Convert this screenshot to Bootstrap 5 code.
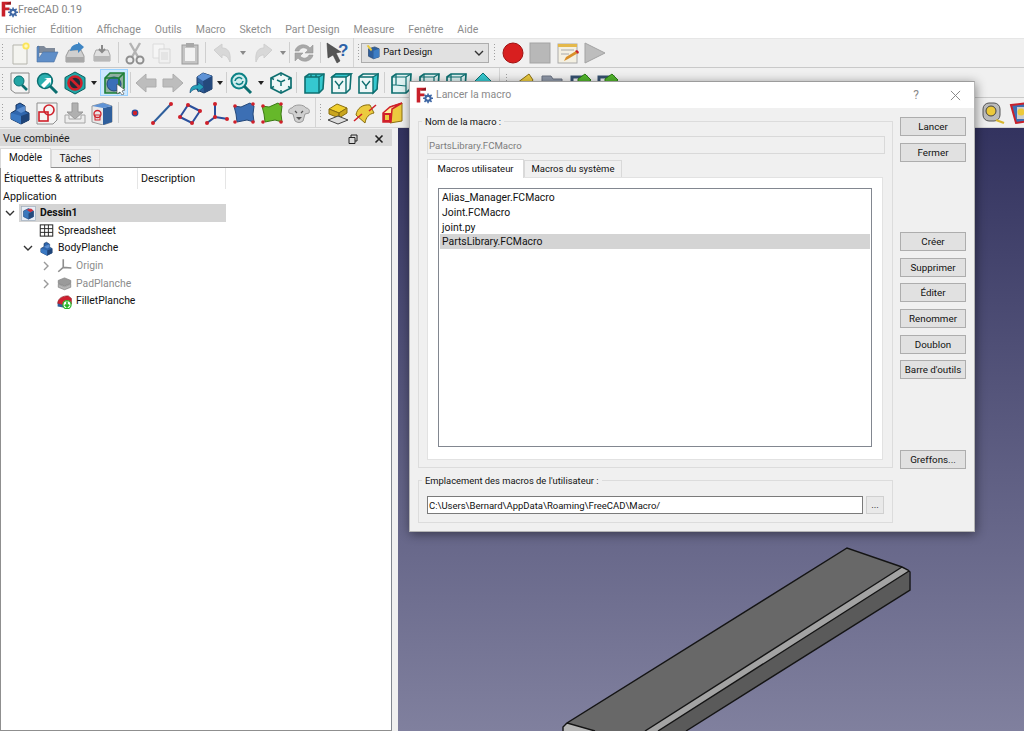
<!DOCTYPE html>
<html lang="fr">
<head>
<meta charset="utf-8">
<title>FreeCAD 0.19</title>
<link href="https://cdn.jsdelivr.net/npm/bootstrap@5.3.0/dist/css/bootstrap.min.css" rel="stylesheet">
<style>
html,body{height:100%;overflow:hidden}
body{font-family:Roboto,"Open Sans",sans-serif;font-size:10.4px;color:#111;background:#f0f0f0;position:relative;width:1024px;height:731px}
.app-title{height:19px;background:#fff;color:#858585;font-size:10.5px;padding-left:1px;line-height:18px}
.app-title svg{width:17px;height:17px}
.app-title span{padding-top:1px}
.app-menu{height:19px;background:#fff;color:#8d8d8d;font-size:10.5px;padding-left:5px;gap:14px;line-height:22px}
.app-tbar{background:#f0f0f0;border-bottom:1px solid #c9c9c9;overflow:hidden;flex:none;height:30px}
.tb1{box-shadow:inset 0 1px 0 #e6e6e6}
.tb3{border-bottom-color:#d4d4d4}
.tb2 .tdrop{width:12px}
.grip{width:6.3px;align-self:stretch;flex:none;margin:5px 0;background-image:radial-gradient(circle,#a0a0a0 .8px,transparent 1px);background-size:3px 3px;background-position:1px 0;background-repeat:repeat-y}
.gripw{width:9.3px;background-position:3px 0}
.tbt{width:27.33px;height:27px;flex:none;display:flex;align-items:center;justify-content:center}
.tbt svg{width:24px;height:24px}
.tbt.on{background:#cce8ff;box-shadow:inset 0 0 0 1px #99d1ff}
.tsep{width:5.7px;flex:none;align-self:stretch;margin:4px 0;position:relative}
.tsep::after{content:"";position:absolute;left:2px;top:0;bottom:0;width:1px;background:#cfcfcf}
.tsep-n{width:1.5px}
.tsep-n::after{left:0}
.tsep-s{width:4.7px}
.tend{width:1px;flex:none;align-self:stretch;background:#d4d4d4;margin:0 2px}
.tdrop{width:12.7px;flex:none;display:flex;justify-content:center}
.tdrop i{display:block;border:3px solid transparent;border-top:4px solid #222;border-bottom:0}
.tdrop.off i{border-top-color:#8a8a8a}
.wb-combo{width:128px;height:20px;flex:none;margin-left:-1px;background:#e1e1e1;border:1px solid #adadad;font-size:9.5px;padding:0 4px;gap:2px;color:#111}
.wb-combo svg.ic{width:15px;height:15px}
.wb-combo svg.ch{width:10px;height:10px;margin-left:auto}
.t-spacer{width:1px;flex:none}
.t-right{margin-left:auto;margin-right:-9.7px;display:flex}
.app-main{height:603px}
.dock{width:392px;flex:none;padding-top:1px}
.dock-head{height:17px;background:#d9d9d9;font-size:10.5px;padding:2px 0 0 3px;margin-bottom:2px;color:#222}
.dock-head .dk{width:26px;display:flex;justify-content:center}
.dock-head svg{width:10px;height:10px}
.dock-tabs{height:19px;font-size:10px}
.dtab{border:1px solid #d9d9d9;border-bottom:0;background:#f0f0f0;line-height:17px;margin-top:1px;width:49px;text-align:center;height:18px}
.dtab.cur{background:#fff;margin-top:0;height:20px;position:relative;z-index:1;width:51px;line-height:18px}
.tree-pan{flex:1;min-height:0;background:#fff;border:1px solid #8f8f8f;border-right-color:#828790}
.tree-head{height:21px;line-height:21px;font-size:10.7px}
.tree-head div{border-right:1px solid #e5e5e5;padding-left:3px}
.th-a{width:137px}
.th-b{width:88px}
.tree-app{height:15px;line-height:15px;padding-left:2px;font-size:10.7px}
.tree-row{height:17.7px;line-height:17.7px}
.t-i{width:18px;flex:none;display:flex;align-items:center;justify-content:center}
.t-i svg{width:15px;height:15px}
.t-i svg.chev{width:10px;height:10px}
.t-l{margin-left:3px}
.t-sel{width:207px;height:18px;background:#d4d4d4}
.t-dim{color:#8c8c8c}
.split{width:6px;flex:none;background:#f0f0f0}
.view3d{flex:1;background:linear-gradient(#33335f,#80809e);position:relative;overflow:hidden}
.view3d svg{position:absolute;left:0;top:0;width:626px;height:603px}
.macro-dlg{position:absolute;left:409px;top:81px;width:566px;height:451px;background:#f0f0f0;border:1px solid #b5b5b5;border-top-color:#9c9c9c;box-shadow:1px 2px 10px rgba(0,0,0,.45);z-index:5}
.dlg-title{height:26px;background:#fff;color:#8a8a8a;font-size:10.5px;padding:0 8px 0 6px}
.dlg-title svg.lg{width:17px;height:17px;margin-right:3px}
.dlg-q{margin-left:auto;width:12px;text-align:center;font-size:12px;color:#8a8a8a}
.dlg-x{width:11px;height:11px;margin:0 5px 0 28px;stroke:#808080}
.dlg-body{padding:9px 8px 0 8px;gap:7px;font-size:9.5px}
.dlg-col{width:475px;flex:none}
.fgrp{border:1px solid #dcdcdc;position:relative;padding:0 8px}
.fgrp-a{height:347px;margin-top:4px;padding-top:14px}
.fgrp-b{height:43px;margin-top:12px;padding-top:15px}
.fgrp-lab{position:absolute;left:3px;top:-7px;background:#f0f0f0;padding:0 3px;line-height:14px;color:#111;font-size:9.4px}
.fld{height:18px;font-size:9.5px;border-radius:0;padding:0 1px;line-height:16px;min-height:0;box-shadow:none}
.fld:disabled,.fld-off{background:#f0f0f0;border:1px solid #d9d9d9;color:#7d7d7d;opacity:1;width:458px;font-size:9.6px}
.fld-path{border:1px solid #7a7a7a;color:#111;width:436px;background:#fff}
.dtab-row{height:18px;margin-top:5px}
.dtab2{border:1px solid #d9d9d9;border-bottom:0;background:#f0f0f0;line-height:16px;margin-top:1px;text-align:center;width:98px;height:17px;font-size:9.5px}
.dtab2.cur{background:#fff;margin-top:0;height:19px;line-height:18px;width:97px;position:relative;z-index:1}
.tab-body{width:456px;height:283px;background:#fff;border:1px solid #e2e2e2;padding:10px}
.macro-list{height:259px;width:434px;border:1px solid #828790;background:#fff;border-radius:0;padding:1px;display:block}
.macro-list .list-group-item{border:0;background:transparent;padding:0 0 0 2px;height:15px;line-height:15px;font-size:10.4px;color:#111;border-radius:0}
.macro-list .list-group-item.active{background:#d4d4d4;color:#111}
.dlg-btn{width:66px;height:19px;padding:0;font-size:9.8px;line-height:17px;background:#e1e1e1;border:1px solid #adadad;border-radius:0;color:#111;flex:none;white-space:nowrap}
.dlg-btns{gap:6.6px;width:66px}
.gap-b1{margin-top:64px}
.gap-b2{margin-top:64.5px}
.dots{width:18px;height:18px;margin-left:3px;background:#e9e9e9;border-color:#d0d0d0;line-height:14px}
</style>
</head>
<body>
<svg width="0" height="0" class="position-absolute">
<defs>
<symbol id="fc" viewBox="0 0 24 24"><path d="M1 1h13v4H6v4h6v4H6v9H1z" fill="#c8202a"/><path d="M6 5h8V1l-1 0zM6 13h5" fill="#8f1820"/><circle cx="17" cy="16" r="5" fill="#3f67a4"/><path d="M17 9v14M10 16h14M12 11l10 10M22 11L12 21" stroke="#3f67a4" stroke-width="2.2"/><circle cx="17" cy="16" r="2" fill="#fff"/></symbol>
<symbol id="new" viewBox="0 0 24 24"><path d="M5 4h12l2 2v17H5z" fill="#f4f4f0" stroke="#b5b5ad"/><circle cx="18" cy="5" r="3.6" fill="#fbe55a"/><circle cx="18" cy="5" r="1.8" fill="#fff8c0"/></symbol>
<symbol id="open" viewBox="0 0 24 24"><path d="M2 5h7l2 2h9v5H2z" fill="#7f8a9a"/><path d="M2 21V6l2-1v12l4-6h15l-4 10z" fill="#5f8ec8" stroke="#4a6f9f" stroke-width=".6"/></symbol>
<symbol id="save" viewBox="0 0 24 24"><path d="M3 15l3-6h12l3 6v6H3z" fill="#cfcfcf" stroke="#9a9a9a"/><rect x="3" y="16" width="18" height="5" fill="#a8a8a8"/><path d="M7 10c1-5 4-7 8-7v-2l6 5-6 6v-3c-3 0-5 0-8 1z" fill="#3f86c4"/></symbol>
<symbol id="saveas" viewBox="0 0 24 24"><path d="M4 14l2-5h12l2 5v6H4z" fill="#e0e0e0" stroke="#a8a8a8"/><rect x="4" y="15" width="16" height="5" fill="#b8b8b8"/><path d="M12 4v7M9 8l3 3 3-3" stroke="#8a8a8a" stroke-width="2" fill="none"/></symbol>
<symbol id="cut" viewBox="0 0 24 24"><path d="M7 2l8 14M17 2L9 16" stroke="#b3b3b3" stroke-width="2.4"/><circle cx="7" cy="19" r="3.5" fill="none" stroke="#8f8f8f" stroke-width="2"/><circle cx="17" cy="19" r="3.5" fill="none" stroke="#8f8f8f" stroke-width="2"/></symbol>
<symbol id="copy" viewBox="0 0 24 24"><path d="M3 3h11v14H3z" fill="#f5f5f5" stroke="#dcdcdc"/><path d="M9 8h11v14H9z" fill="#f0f0f0" stroke="#d6d6d6"/><rect x="11" y="11" width="7" height="8" fill="#e4e4e4"/></symbol>
<symbol id="paste" viewBox="0 0 24 24"><rect x="4" y="4" width="16" height="19" fill="#c4c4c4" stroke="#9b9b9b"/><rect x="7" y="7" width="10" height="13" fill="#f2f2f2"/><rect x="8" y="2" width="8" height="4" fill="#a8a8a8"/></symbol>
<symbol id="undo" viewBox="0 0 24 24"><path d="M3 9l8-6v4c6 0 9 4 8 14-2-5-4-7-8-7v3z" fill="#d8d8d8" stroke="#cfcfcf"/></symbol>
<symbol id="redo" viewBox="0 0 24 24"><path d="M21 9l-8-6v4c-6 0-9 4-8 14 2-5 4-7 8-7v3z" fill="#d8d8d8" stroke="#cfcfcf"/></symbol>
<symbol id="refr" viewBox="0 0 24 24"><path d="M3 10C4 4 13 1 18 7l3-3v8h-8l3-3c-3-3-7-3-9 1zM21 14c-1 6-10 9-15 3l-3 3v-8h8l-3 3c3 3 7 3 9-1z" fill="#a8a8a8" stroke="#8e8e8e" stroke-width=".5"/></symbol>
<symbol id="what" viewBox="0 0 24 24"><path d="M2 2l14 9-5 1 4 8-3 2-4-8-5 3z" fill="#555" stroke="#333" stroke-width=".5"/><text x="13" y="15" font-size="17" font-weight="700" fill="#2d62a8" font-family="Liberation Sans">?</text></symbol>
<symbol id="pdwb" viewBox="0 0 24 24"><path d="M4 6l10-3 7 3v13l-9 3-8-4z" fill="#2f5f9c" stroke="#1c3c66"/><path d="M12 9l9-3v13l-9 3z" fill="#3d7dc4"/><path d="M1 1l3-1 6 7-2 3z" fill="#e8c838"/></symbol>
<symbol id="rec" viewBox="0 0 24 24"><circle cx="12" cy="12" r="10" fill="#d81f1f" stroke="#a01212"/></symbol>
<symbol id="stop" viewBox="0 0 24 24"><rect x="2" y="2" width="20" height="20" fill="#b8b8b8" stroke="#a3a3a3"/></symbol>
<symbol id="note" viewBox="0 0 24 24"><rect x="2" y="3" width="19" height="19" fill="#f4f0e2" stroke="#aaa"/><rect x="2" y="3" width="19" height="3" fill="#e4b84a"/><path d="M5 9h13M5 13h8" stroke="#aaa"/><path d="M8 20l2-4 10-6 2 2-10 6z" fill="#d9902a"/><path d="M19 10l2-1 2 2-1 2z" fill="#c8202a"/></symbol>
<symbol id="play" viewBox="0 0 24 24"><path d="M2 2l20 10L2 22z" fill="#bdbdbd" stroke="#a3a3a3"/></symbol>
<symbol id="fit" viewBox="0 0 24 24"><path d="M3 2h18v20H7l-4-3z" fill="#f3f3f3" stroke="#8a8a8a"/><circle cx="11" cy="10" r="5" fill="#23a5a5" stroke="#0b6e70"/><path d="M14 14l5 5" stroke="#0b6e70" stroke-width="2.6"/></symbol>
<symbol id="fits" viewBox="0 0 24 24"><circle cx="10" cy="10" r="7.5" fill="#2bb0b0" stroke="#0b6e70" stroke-width="1.4"/><path d="M15 15l7 7" stroke="#0b6e70" stroke-width="3"/><path d="M6 14l6-6-3-1h7v7l-1-3-6 6z" fill="#fff"/></symbol>
<symbol id="nodraw" viewBox="0 0 24 24"><path d="M12 1l10 5.5v11L12 23 2 17.5v-11z" fill="#20a8a8" stroke="#0b5f60"/><circle cx="12" cy="12" r="6.5" fill="#202c38" stroke="#d0202a" stroke-width="2.6"/><path d="M7 7l10 10" stroke="#d0202a" stroke-width="2.6"/></symbol>
<symbol id="selc" viewBox="0 0 24 24"><path d="M3 7l5-5h14v15l-5 5H3z" fill="#8fb0a0" stroke="#1d7f34" stroke-width="1.6"/><circle cx="12" cy="13" r="7" fill="#3a6fb8" stroke="#24497c"/><path d="M3 7h14v15M17 7l5-5" fill="none" stroke="#1d7f34" stroke-width="1.6"/><path d="M15 13l8 6-3 1 2 3-2 1-2-3-3 2z" fill="#fff" stroke="#444" stroke-width=".6"/></symbol>
<symbol id="back" viewBox="0 0 24 24"><path d="M2 12l10-9v5h10v8H12v5z" fill="#bdbdbd" stroke="#adadad"/></symbol>
<symbol id="fwd" viewBox="0 0 24 24"><path d="M22 12L12 3v5H2v8h10v5z" fill="#bdbdbd" stroke="#adadad"/></symbol>
<symbol id="bbox" viewBox="0 0 24 24"><path d="M8 6l6-4 9 3v13l-8 4-7-3z" fill="#2f5f9c" stroke="#1c3c66"/><path d="M14 10l9-5v13l-8 4z" fill="#24497c"/><path d="M8 6l6 4 9-5-9-3z" fill="#5f93d6"/><path d="M1 22c0-6 3-8 8-8v-3l6 5-6 5v-3c-4 0-6 1-8 4z" fill="#25a0b8" stroke="#136" stroke-width=".5"/></symbol>
<symbol id="zoomr" viewBox="0 0 24 24"><circle cx="10" cy="10" r="7.5" fill="#cdecec" stroke="#0b8286" stroke-width="2"/><path d="M15 15l7 7" stroke="#0b6e70" stroke-width="3"/><path d="M6 10a4 4 0 017-2M14 10a4 4 0 01-7 2" stroke="#0b8286" stroke-width="1.6" fill="none"/></symbol>
<symbol id="iso" viewBox="0 0 24 24"><path d="M12 2l10 5v10l-10 5-10-5V7z" fill="#eef7f7" stroke="#0e6f70" stroke-width="1.7"/><path d="M2 7l3 1.5M22 7l-3 1.5M12 2v3M12 22v-3M2 17l3-1.5M22 17l-3-1.5M8 9l4 2 4-2M12 11v4" stroke="#0e6f70" stroke-width="1.5" fill="none"/></symbol>
<symbol id="cf" viewBox="0 0 24 24"><path d="M3 6l4-3h15l-1 15-4 4H3z" fill="#35c8cf" stroke="#0e6f70" stroke-width="1.6"/><path d="M3 6h14v16M17 6l5-3M9 3.4v2M14 3.4v2" fill="none" stroke="#0e6f70" stroke-width="1.4"/></symbol>
<symbol id="ct" viewBox="0 0 24 24"><path d="M3 6l4-3h15l-1 15-4 4H3z" fill="#eef7f7" stroke="#0e6f70" stroke-width="1.6"/><path d="M3 6l4-3h15l-5 3z" fill="#35c8cf" stroke="#0e6f70" stroke-width="1.4"/><path d="M17 6v16M10 15v3M6 10l4 5 4-5" fill="none" stroke="#0e6f70" stroke-width="1.4"/></symbol>
<symbol id="cr" viewBox="0 0 24 24"><path d="M3 6l4-3h15l-1 15-4 4H3z" fill="#eef7f7" stroke="#0e6f70" stroke-width="1.6"/><path d="M17 6l5-3-1 15-4 4z" fill="#35c8cf" stroke="#0e6f70" stroke-width="1.4"/><path d="M3 6h14M10 15v3M6 10l4 5 4-5" fill="none" stroke="#0e6f70" stroke-width="1.4"/></symbol>
<symbol id="cb" viewBox="0 0 24 24"><path d="M3 6l4-3h15l-1 15-4 4H3z" fill="#dff2f2" stroke="#0e6f70" stroke-width="1.7"/><path d="M3 6h14v16M17 6l5-3M7 3v11H3M7 14l10 1" fill="none" stroke="#0e6f70" stroke-width="1.2"/></symbol>
<symbol id="drm" viewBox="0 0 24 24"><path d="M12 2l9 9-9 9-9-9z" fill="#35c8cf" stroke="#0b6e70"/><path d="M5 19h14" stroke="#0b6e70" stroke-width="2"/></symbol>
<symbol id="yel" viewBox="0 0 24 24"><path d="M4 12l12-9 4 6-6 9z" fill="#eccb3f" stroke="#8a6f10"/></symbol>
<symbol id="fold" viewBox="0 0 24 24"><path d="M2 5h9l2 3h9v13H2z" fill="#8f98a8" stroke="#6a7280"/></symbol>
<symbol id="grn" viewBox="0 0 24 24"><path d="M4 6h14v14H4z" fill="none" stroke="#35506f" stroke-width="3"/><path d="M10 8l7-5 6 6-6 5v-3h-7z" fill="#52b52c" stroke="#2b7a14"/></symbol>
<symbol id="body" viewBox="0 0 24 24"><path d="M3 12l5-3V4l4-2 5 3v5l4 2v7l-8 4-10-5z" fill="#2f66ad" stroke="#14335e"/><path d="M13 15l8-3v7l-8 4z" fill="#1f4478"/><path d="M3 12l10 3v8l-10-5z" fill="#3a78c2"/><path d="M8 9l5 3 4-2V5l-5 2z" fill="#5d8fd0"/></symbol>
<symbol id="sketch" viewBox="0 0 24 24"><path d="M2 2h20v17l-4 4H2z" fill="#f4f4f4" stroke="#8f8f8f"/><rect x="4" y="11" width="9" height="9" fill="none" stroke="#d0202a" stroke-width="1.6"/><circle cx="14" cy="9" r="5" fill="none" stroke="#d0202a" stroke-width="1.6"/></symbol>
<symbol id="imp" viewBox="0 0 24 24"><path d="M9 2h6v9h5l-8 7-8-7h5z" fill="#b0b0b0" stroke="#989898"/><path d="M2 14v8h20v-8h-4v4H6v-4z" fill="#ededed" stroke="#a5a5a5"/></symbol>
<symbol id="bred" viewBox="0 0 24 24"><path d="M2 5l11-3 9 3v16l-9 3-11-3z" fill="#e8e8e8" stroke="#999"/><path d="M13 7l9-2v16l-9 3z" fill="#2f5f9c"/><path d="M2 5l11 2 9-2-9-3z" fill="#5f93d6"/><circle cx="7.5" cy="13" r="3.5" fill="none" stroke="#d0202a" stroke-width="1.3"/><rect x="5" y="14" width="5" height="5" fill="none" stroke="#d0202a"/></symbol>
<symbol id="pt" viewBox="0 0 24 24"><circle cx="12" cy="12" r="2.8" fill="#d0202a" stroke="#2a4f9c" stroke-width="1.2"/></symbol>
<symbol id="ln" viewBox="0 0 24 24"><path d="M3 22L21 3" stroke="#2f5f9c" stroke-width="2"/><circle cx="3" cy="22" r="2" fill="#d0202a"/><circle cx="21" cy="3" r="2" fill="#d0202a"/></symbol>
<symbol id="rct" viewBox="0 0 24 24"><path d="M10 4l12 6-8 12-12-6z" fill="none" stroke="#2a4f9c" stroke-width="2"/><g fill="#d0202a"><circle cx="10" cy="4" r="2"/><circle cx="22" cy="10" r="2"/><circle cx="14" cy="22" r="2"/><circle cx="2" cy="16" r="2"/></g></symbol>
<symbol id="ax" viewBox="0 0 24 24"><path d="M10 3v13l-8 6M10 16l13 2" stroke="#2a4f9c" stroke-width="2" fill="none"/><g fill="#d0202a"><circle cx="10" cy="3" r="2"/><circle cx="2" cy="22" r="2"/><circle cx="22" cy="18" r="2"/><circle cx="10" cy="16" r="2"/></g></symbol>
<symbol id="sb" viewBox="0 0 24 24"><path d="M2 5l7 1 9-4 4 3-1 8 1 8-7-2-10 2-1-8z" fill="#3c6fb4" stroke="#25487a"/><g fill="#d0202a"><circle cx="3" cy="5" r="1.8"/><circle cx="21" cy="3" r="1.8"/><circle cx="3" cy="21" r="1.8"/><circle cx="21" cy="21" r="1.8"/></g></symbol>
<symbol id="sg" viewBox="0 0 24 24"><path d="M2 5l7 1 9-4 4 3-1 8 1 8-7-2-10 2-1-8z" fill="#66b82a" stroke="#3c7a14"/><g fill="#d0202a"><circle cx="3" cy="5" r="1.8"/><circle cx="21" cy="3" r="1.8"/><circle cx="3" cy="21" r="1.8"/><circle cx="21" cy="21" r="1.8"/></g></symbol>
<symbol id="shp" viewBox="0 0 24 24"><path d="M5 7c2-4 12-4 14 0 3 0 4 3 3 5l-4 1-2 7c-3 2-5 2-8 0l-2-7-4-1c-1-2 0-5 3-5z" fill="#cfcfcf" stroke="#9a9a9a"/><path d="M8 10l2 2M16 10l-2 2" stroke="#555" stroke-width="1.2"/><path d="M9 16h6l-3 3z" fill="#555"/></symbol>
<symbol id="pad" viewBox="0 0 24 24"><path d="M3 8l8-5 10 4-8 5z" fill="#f0cf2e" stroke="#8a6f10"/><path d="M3 8v5l10 4v-5zM13 12v5l8-5V7z" fill="#c9a51f" stroke="#8a6f10"/><path d="M2 19l10-4 10 4-10 4z" fill="#ddd" stroke="#444"/></symbol>
<symbol id="rev" viewBox="0 0 24 24"><path d="M3 14C4 7 10 3 17 4l4 8c-5 1-8 4-9 10z" fill="#eccb3f" stroke="#8a6f10"/><path d="M1 20L9 13M16 10l7-6" stroke="#d0202a" stroke-width="1.6"/></symbol>
<symbol id="gro" viewBox="0 0 24 24"><path d="M10 6l12-4v18l-12 2z" fill="#eccb3f" stroke="#8a6f10"/><path d="M3 12l7-6 12-4-10 6-1 13H3z" fill="#fff0a0" stroke="#d0202a" stroke-width="1.5"/><rect x="3" y="12" width="8" height="9" fill="#d0202a"/><rect x="5" y="14" width="4" height="5" fill="#eccb3f"/></symbol>
<symbol id="tape" viewBox="0 0 24 24"><rect x="2" y="2" width="17" height="18" rx="6" fill="#bbb" stroke="#555"/><circle cx="10" cy="10" r="5" fill="#ecc93a" stroke="#444"/><path d="M15 19l8 3" stroke="#d8b72e" stroke-width="2.4"/></symbol>
<symbol id="tape2" viewBox="0 0 24 24"><path d="M3 4l17-2 2 18-14 2z" fill="#3c6fb4" stroke="#c8202a" stroke-width="2"/><rect x="9" y="6" width="10" height="12" fill="#ccc"/><circle cx="13" cy="11" r="3.5" fill="#ecc93a"/></symbol>
<symbol id="cbox" viewBox="0 0 24 24"><rect x="1" y="1" width="22" height="22" fill="#e8eef6" stroke="#9ab"/><path d="M4 8l8-4 8 4v9l-8 4-8-4z" fill="#3a78bd" stroke="#234d82"/><path d="M12 12l8-4v9l-8 4z" fill="#24497c"/><path d="M9 6l7-2 4 3-5 3z" fill="#cf2d3a"/></symbol>
<symbol id="sheet" viewBox="0 0 24 24"><rect x="2" y="3" width="20" height="18" fill="#fff" stroke="#222" stroke-width="1.6"/><path d="M2 9h20M2 15h20M9 3v18M15 3v18" stroke="#222" stroke-width="1.5"/></symbol>
<symbol id="ori" viewBox="0 0 24 24"><path d="M10 2v13l-8 7M10 15l13 1" stroke="#8e8e8e" stroke-width="2.6" fill="none"/></symbol>
<symbol id="padg" viewBox="0 0 24 24"><path d="M2 7l10-4 10 4v5l-10 4-10-4z" fill="#9a9a9a" stroke="#777"/><path d="M2 13l10 4 10-4v5l-10 4-10-4z" fill="#b5b5b5" stroke="#777"/></symbol>
<symbol id="fil" viewBox="0 0 24 24"><path d="M1 15C2 6 9 3 18 3l5 4v9l-9 6z" fill="#cf2030" stroke="#80161e"/><path d="M1 15l11 3v4l-11-2z" fill="#2f5f9c"/><circle cx="16" cy="17" r="6.5" fill="#fff" stroke="#28b628" stroke-width="2"/><path d="M16 12v9M12.5 17l3.5 4 3.5-4" stroke="#28b628" stroke-width="2.6" fill="none"/></symbol>
<symbol id="cv-d" viewBox="0 0 10 10"><path d="M1 3l4 4 4-4" fill="none" stroke="#333" stroke-width="1.4"/></symbol>
<symbol id="cv-r" viewBox="0 0 10 10"><path d="M3 1l4 4-4 4" fill="none" stroke="#9a9a9a" stroke-width="1.4"/></symbol>
</defs>
</svg>

<div class="d-flex flex-column h-100">
  <div class="app-title d-flex align-items-center"><svg><use href="#fc"/></svg><span>FreeCAD 0.19</span></div>
  <div class="app-menu d-flex"><span>Fichier</span><span>Édition</span><span>Affichage</span><span>Outils</span><span>Macro</span><span>Sketch</span><span>Part Design</span><span>Measure</span><span>Fenêtre</span><span>Aide</span></div>

  <div class="app-tbar tb1 d-flex align-items-center">
    <div class="grip"></div>
    <div class="tbt"><svg><use href="#new"/></svg></div><div class="tbt"><svg><use href="#open"/></svg></div><div class="tbt"><svg><use href="#save"/></svg></div><div class="tbt"><svg><use href="#saveas"/></svg></div>
    <div class="tsep"></div>
    <div class="tbt"><svg><use href="#cut"/></svg></div><div class="tbt"><svg><use href="#copy"/></svg></div><div class="tbt"><svg><use href="#paste"/></svg></div>
    <div class="tsep"></div>
    <div class="tbt"><svg><use href="#undo"/></svg></div><div class="tdrop off"><i></i></div><div class="tbt"><svg><use href="#redo"/></svg></div><div class="tdrop off"><i></i></div>
    <div class="tsep tsep-n"></div>
    <div class="tbt"><svg><use href="#refr"/></svg></div>
    <div class="tsep"></div>
    <div class="tbt"><svg><use href="#what"/></svg></div>
    <div class="tend"></div><div class="grip"></div>
    <div class="wb-combo d-flex align-items-center"><svg class="ic"><use href="#pdwb"/></svg><span>Part Design</span><svg class="ch"><use href="#cv-d"/></svg></div>
    <div class="t-spacer"></div><div class="grip gripw"></div>
    <div class="tbt"><svg><use href="#rec"/></svg></div><div class="tbt"><svg><use href="#stop"/></svg></div><div class="tbt"><svg><use href="#note"/></svg></div><div class="tbt"><svg><use href="#play"/></svg></div>
  </div>

  <div class="app-tbar tb2 d-flex align-items-center">
    <div class="grip"></div>
    <div class="tbt"><svg><use href="#fit"/></svg></div><div class="tbt"><svg><use href="#fits"/></svg></div><div class="tbt"><svg><use href="#nodraw"/></svg></div><div class="tdrop"><i></i></div>
    <div class="tbt on"><svg><use href="#selc"/></svg></div>
    <div class="tsep tsep-s"></div>
    <div class="tbt"><svg><use href="#back"/></svg></div><div class="tbt"><svg><use href="#fwd"/></svg></div><div class="tbt"><svg><use href="#bbox"/></svg></div><div class="tdrop"><i></i></div>
    <div class="tsep tsep-n"></div>
    <div class="tbt"><svg><use href="#zoomr"/></svg></div><div class="tdrop"><i></i></div><div class="tbt"><svg><use href="#iso"/></svg></div>
    <div class="tsep"></div>
    <div class="tbt"><svg><use href="#cf"/></svg></div><div class="tbt"><svg><use href="#ct"/></svg></div><div class="tbt"><svg><use href="#cr"/></svg></div>
    <div class="tsep"></div>
    <div class="tbt"><svg><use href="#cb"/></svg></div><div class="tbt"><svg><use href="#cb"/></svg></div><div class="tbt"><svg><use href="#cb"/></svg></div><div class="tbt"><svg><use href="#drm"/></svg></div>
    <div class="tend"></div><div class="grip gripw"></div>
    <div class="tbt"><svg><use href="#yel"/></svg></div><div class="tbt"><svg><use href="#fold"/></svg></div><div class="tbt"><svg><use href="#grn"/></svg></div><div class="tbt"><svg><use href="#grn"/></svg></div>
  </div>

  <div class="app-tbar tb3 d-flex align-items-center">
    <div class="grip"></div>
    <div class="tbt"><svg><use href="#body"/></svg></div><div class="tbt"><svg><use href="#sketch"/></svg></div><div class="tbt"><svg><use href="#imp"/></svg></div><div class="tbt"><svg><use href="#bred"/></svg></div>
    <div class="tsep"></div>
    <div class="tbt"><svg><use href="#pt"/></svg></div><div class="tbt"><svg><use href="#ln"/></svg></div><div class="tbt"><svg><use href="#rct"/></svg></div><div class="tbt"><svg><use href="#ax"/></svg></div><div class="tbt"><svg><use href="#sb"/></svg></div><div class="tbt"><svg><use href="#sg"/></svg></div><div class="tbt"><svg><use href="#shp"/></svg></div>
    <div class="tend"></div><div class="grip"></div>
    <div class="tbt"><svg><use href="#pad"/></svg></div><div class="tbt"><svg><use href="#rev"/></svg></div><div class="tbt"><svg><use href="#gro"/></svg></div>
    <div class="t-right"><div class="tbt"><svg><use href="#tape"/></svg></div><div class="tbt"><svg><use href="#tape2"/></svg></div></div>
  </div>

  <div class="app-main d-flex">
    <div class="dock d-flex flex-column">
      <div class="dock-head d-flex align-items-center justify-content-between"><span>Vue combinée</span><span class="d-flex"><span class="dk"><svg viewBox="0 0 10 10"><path d="M1 3.5h6v6H1zM3 3.5V1h6v6H7" fill="none" stroke="#222"/></svg></span><span class="dk"><svg viewBox="0 0 10 10"><path d="M1.5 1.5l7 7M8.5 1.5l-7 7" stroke="#222" stroke-width="1.6"/></svg></span></span></div>
      <div class="dock-tabs d-flex"><div class="dtab cur">Modèle</div><div class="dtab">Tâches</div></div>
      <div class="tree-pan">
        <div class="tree-head d-flex"><div class="th-a">Étiquettes &amp; attributs</div><div class="th-b">Description</div></div>
        <div class="tree-app">Application</div>
        <div class="tree-row d-flex"><div class="t-i"><svg class="chev"><use href="#cv-d"/></svg></div><div class="t-sel d-flex"><div class="t-i"><svg><use href="#cbox"/></svg></div><b class="t-l">Dessin1</b></div></div>
        <div class="tree-row d-flex"><div class="t-i"></div><div class="t-i"></div><div class="t-i"><svg><use href="#sheet"/></svg></div><span class="t-l">Spreadsheet</span></div>
        <div class="tree-row d-flex"><div class="t-i"></div><div class="t-i"><svg class="chev"><use href="#cv-d"/></svg></div><div class="t-i"><svg><use href="#body"/></svg></div><span class="t-l">BodyPlanche</span></div>
        <div class="tree-row d-flex t-dim"><div class="t-i"></div><div class="t-i"></div><div class="t-i"><svg class="chev"><use href="#cv-r"/></svg></div><div class="t-i"><svg><use href="#ori"/></svg></div><span class="t-l">Origin</span></div>
        <div class="tree-row d-flex t-dim"><div class="t-i"></div><div class="t-i"></div><div class="t-i"><svg class="chev"><use href="#cv-r"/></svg></div><div class="t-i"><svg><use href="#padg"/></svg></div><span class="t-l">PadPlanche</span></div>
        <div class="tree-row d-flex"><div class="t-i"></div><div class="t-i"></div><div class="t-i"></div><div class="t-i"><svg><use href="#fil"/></svg></div><span class="t-l">FilletPlanche</span></div>
      </div>
    </div>
    <div class="split"></div>
    <div class="view3d">
      <svg viewBox="398 128 626 603">
        <path d="M847 548L902 567 645 731H595L567 723z" fill="#686868"/>
        <path d="M902 567l6 3 1 2-251 159H645z" fill="#a3a3a3"/>
        <path d="M909 571l1 19-224 141h-28z" fill="#5a5a5a"/>
        <path d="M567 723l-4 4v4h32z" fill="#b5b5b5"/>
        <path d="M595 731l-28-8L847 548 902 567l6 3 2 2v18L686 731M902 567L645 731M909 571L658 731M567 723l-4 4v4" fill="none" stroke="#141414" stroke-width="1.4"/>
      </svg>
    </div>
  </div>
</div>

<div class="macro-dlg d-flex flex-column" role="dialog">
  <div class="dlg-title d-flex align-items-center"><svg class="lg"><use href="#fc"/></svg><span>Lancer la macro</span><span class="dlg-q">?</span><svg class="dlg-x" viewBox="0 0 12 12"><path d="M1 1l10 10M11 1L1 11" fill="none"/></svg></div>
  <div class="dlg-body d-flex">
    <div class="dlg-col">
      <div class="fgrp fgrp-a">
        <div class="fgrp-lab">Nom de la macro :</div>
        <input class="form-control fld fld-off" type="text" value="PartsLibrary.FCMacro" disabled>
        <div class="dtab-row d-flex"><div class="dtab2 cur">Macros utilisateur</div><div class="dtab2">Macros du système</div></div>
        <div class="tab-body">
          <div class="list-group macro-list">
            <div class="list-group-item">Alias_Manager.FCMacro</div>
            <div class="list-group-item">Joint.FCMacro</div>
            <div class="list-group-item">joint.py</div>
            <div class="list-group-item active">PartsLibrary.FCMacro</div>
          </div>
        </div>
      </div>
      <div class="fgrp fgrp-b">
        <div class="fgrp-lab">Emplacement des macros de l'utilisateur :</div>
        <div class="d-flex"><input class="form-control fld fld-path" type="text" value="C:\Users\Bernard\AppData\Roaming\FreeCAD\Macro/"><button class="btn dlg-btn dots" type="button">...</button></div>
      </div>
    </div>
    <div class="dlg-btns d-flex flex-column">
      <button class="btn dlg-btn" type="button">Lancer</button>
      <button class="btn dlg-btn" type="button">Fermer</button>
      <button class="btn dlg-btn gap-b1" type="button">Créer</button>
      <button class="btn dlg-btn" type="button">Supprimer</button>
      <button class="btn dlg-btn" type="button">Éditer</button>
      <button class="btn dlg-btn" type="button">Renommer</button>
      <button class="btn dlg-btn" type="button">Doublon</button>
      <button class="btn dlg-btn" type="button">Barre d'outils</button>
      <button class="btn dlg-btn gap-b2" type="button">Greffons...</button>
    </div>
  </div>
</div>
<script src="https://cdn.jsdelivr.net/npm/bootstrap@5.3.0/dist/js/bootstrap.bundle.min.js"></script>
</body>
</html>
